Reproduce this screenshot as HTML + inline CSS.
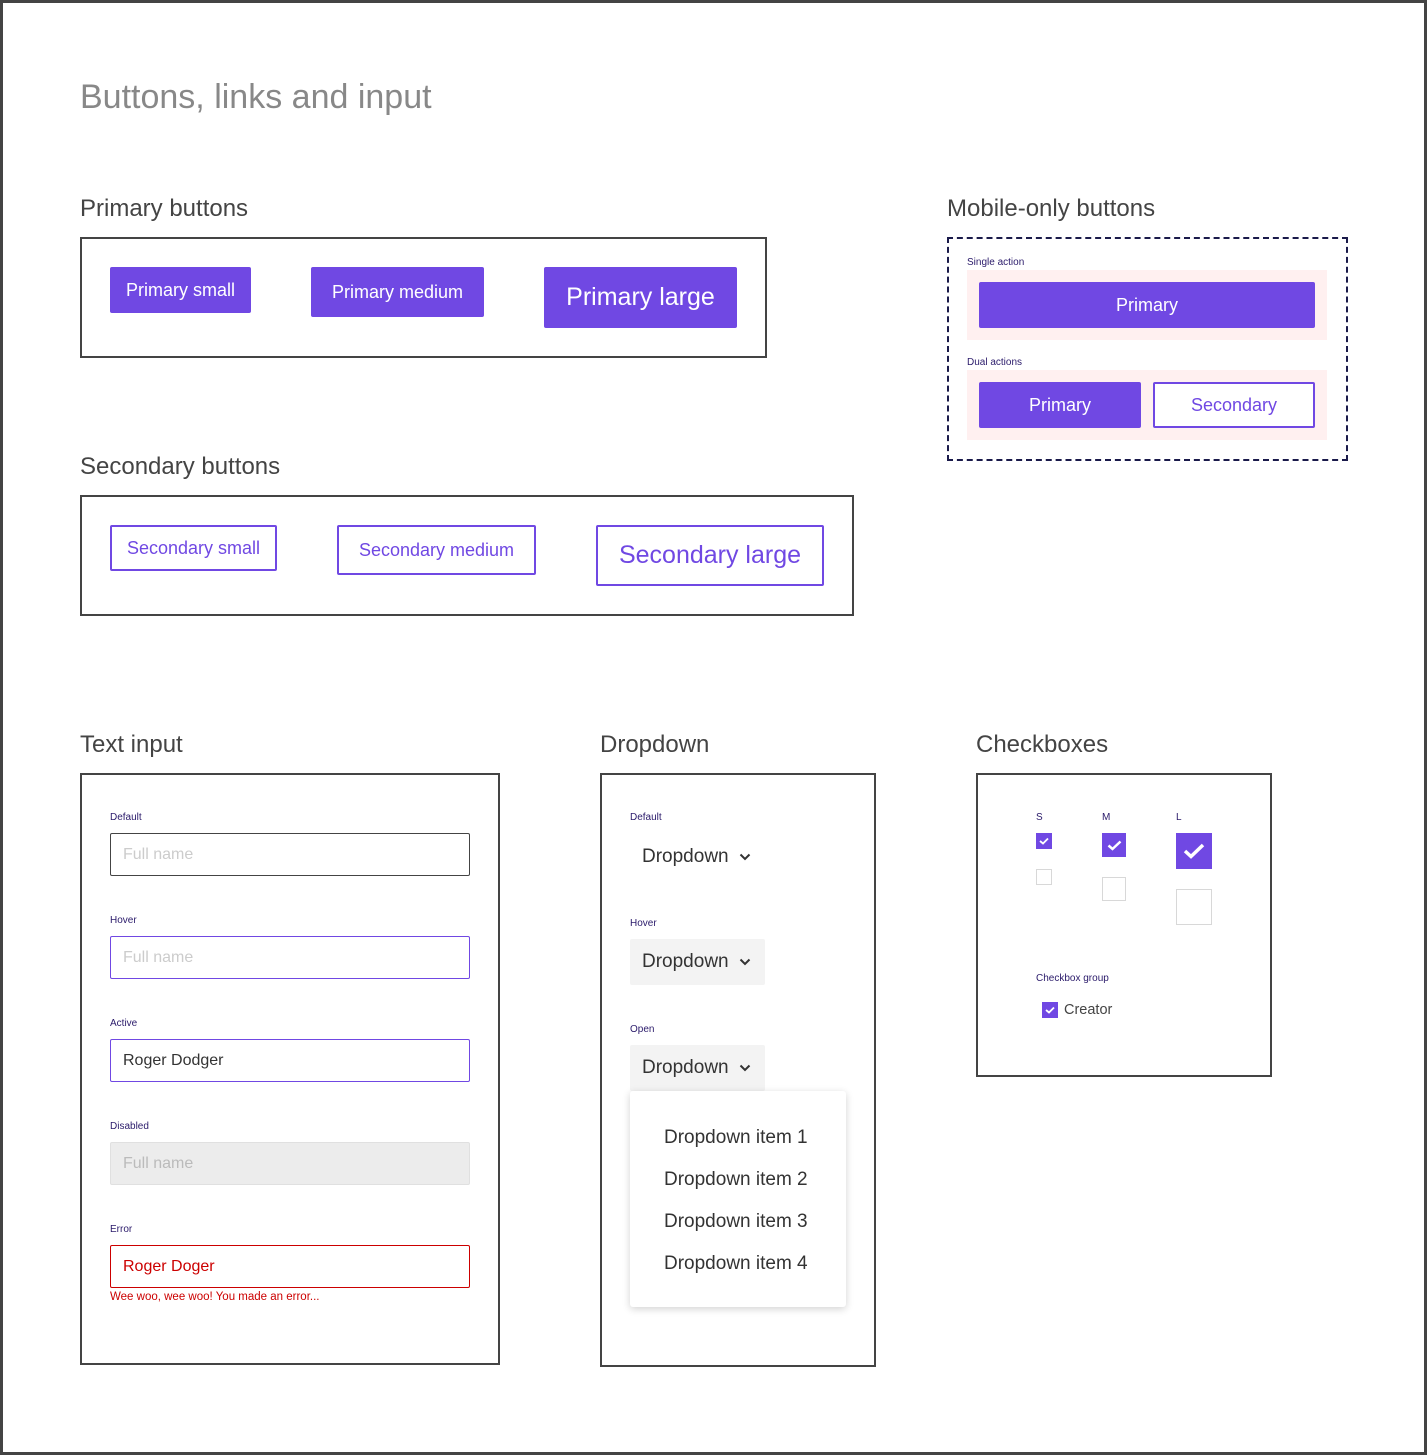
<!DOCTYPE html>
<html><head><meta charset="utf-8"><style>
*{margin:0;padding:0;box-sizing:border-box}
body{width:1427px;height:1455px;position:relative;background:#fff;font-family:"Liberation Sans",sans-serif;overflow:hidden}
.frame{position:absolute;left:0;top:0;width:1427px;height:1455px;border:3px solid #444}
.a{position:absolute}
.h{position:absolute;font-size:24px;color:#444;line-height:1}
.box{position:absolute;border:2px solid #444}
.pb{position:absolute;background:#7048e3;color:#fff;display:flex;align-items:center;justify-content:center;border-radius:2px}
.sb{position:absolute;border:2px solid #7048e3;color:#7048e3;display:flex;align-items:center;justify-content:center;background:#fff;border-radius:2px}
.lbl{position:absolute;font-size:10px;color:#2a1a6a;line-height:1}
.in{position:absolute;left:110px;width:360px;height:43px;border:1px solid #444;border-radius:2px;font-size:16px;padding-left:12px;display:flex;align-items:center;color:#ccc}
.dd{position:absolute;left:630px;width:135px;height:46px;font-size:19px;color:#333;display:flex;align-items:center;padding-left:12px;border-radius:2px}
.dd svg{margin-left:10px}
.cb{position:absolute;background:#7048e3;display:flex;align-items:center;justify-content:center}
.cu{position:absolute;border:1px solid #d8d8d8}
.it{position:absolute;left:664px;font-size:19px;color:#333;line-height:1}
</style></head><body>
<div class="frame"></div>
<div class="a" style="left:80px;top:80px;font-size:34px;color:#888;line-height:1">Buttons, links and input</div>

<div class="h" style="left:80px;top:197px">Primary buttons</div>
<div class="box" style="left:80px;top:237px;width:687px;height:121px"></div>
<div class="pb" style="left:110px;top:267px;width:141px;height:46px;font-size:18px">Primary small</div>
<div class="pb" style="left:311px;top:267px;width:173px;height:50px;font-size:18px">Primary medium</div>
<div class="pb" style="left:544px;top:267px;width:193px;height:61px;font-size:25px">Primary large</div>

<div class="h" style="left:80px;top:455px">Secondary buttons</div>
<div class="box" style="left:80px;top:495px;width:774px;height:121px"></div>
<div class="sb" style="left:110px;top:525px;width:167px;height:46px;font-size:18px">Secondary small</div>
<div class="sb" style="left:337px;top:525px;width:199px;height:50px;font-size:18px">Secondary medium</div>
<div class="sb" style="left:596px;top:525px;width:228px;height:61px;font-size:25px">Secondary large</div>

<div class="h" style="left:947px;top:197px">Mobile-only buttons</div>
<div class="a" style="left:947px;top:237px;width:401px;height:224px;border:2px dashed #1a1a4a"></div>
<div class="lbl" style="left:967px;top:258px">Single action</div>
<div class="a" style="left:967px;top:270px;width:360px;height:70px;background:#fff0f0"></div>
<div class="pb" style="left:979px;top:282px;width:336px;height:46px;font-size:18px">Primary</div>
<div class="lbl" style="left:967px;top:358px">Dual actions</div>
<div class="a" style="left:967px;top:370px;width:360px;height:70px;background:#fff0f0"></div>
<div class="pb" style="left:979px;top:382px;width:162px;height:46px;font-size:18px">Primary</div>
<div class="sb" style="left:1153px;top:382px;width:162px;height:46px;font-size:18px">Secondary</div>

<div class="h" style="left:80px;top:733px">Text input</div>
<div class="box" style="left:80px;top:773px;width:420px;height:592px"></div>
<div class="lbl" style="left:110px;top:813px">Default</div>
<div class="in" style="top:833px">Full name</div>
<div class="lbl" style="left:110px;top:916px">Hover</div>
<div class="in" style="top:936px;border-color:#7048e3">Full name</div>
<div class="lbl" style="left:110px;top:1019px">Active</div>
<div class="in" style="top:1039px;border-color:#7048e3;color:#333">Roger Dodger</div>
<div class="lbl" style="left:110px;top:1122px">Disabled</div>
<div class="in" style="top:1142px;border-color:#e0e0e0;background:#ececec;color:#bbb">Full name</div>
<div class="lbl" style="left:110px;top:1225px">Error</div>
<div class="in" style="top:1245px;border-color:#c00;color:#c00">Roger Doger</div>
<div class="a" style="left:110px;top:1292px;font-size:11.5px;color:#c00;line-height:1">Wee woo, wee woo! You made an error...</div>

<div class="h" style="left:600px;top:733px">Dropdown</div>
<div class="box" style="left:600px;top:773px;width:276px;height:594px"></div>
<div class="lbl" style="left:630px;top:813px">Default</div>
<div class="dd" style="top:834px">Dropdown<svg width="12" height="8" viewBox="0 0 12 8"><path d="M1.5 1.5 L6 6 L10.5 1.5" fill="none" stroke="#333" stroke-width="2"/></svg></div>
<div class="lbl" style="left:630px;top:919px">Hover</div>
<div class="dd" style="top:939px;background:#f3f3f3">Dropdown<svg width="12" height="8" viewBox="0 0 12 8"><path d="M1.5 1.5 L6 6 L10.5 1.5" fill="none" stroke="#333" stroke-width="2"/></svg></div>
<div class="lbl" style="left:630px;top:1025px">Open</div>
<div class="dd" style="top:1045px;background:#f3f3f3">Dropdown<svg width="12" height="8" viewBox="0 0 12 8"><path d="M1.5 1.5 L6 6 L10.5 1.5" fill="none" stroke="#333" stroke-width="2"/></svg></div>
<div class="a" style="left:630px;top:1091px;width:216px;height:216px;background:#fff;border-radius:3px;box-shadow:0 2px 8px rgba(0,0,0,0.18)"></div>
<div class="it" style="top:1128px">Dropdown item 1</div>
<div class="it" style="top:1170px">Dropdown item 2</div>
<div class="it" style="top:1212px">Dropdown item 3</div>
<div class="it" style="top:1254px">Dropdown item 4</div>

<div class="h" style="left:976px;top:733px">Checkboxes</div>
<div class="box" style="left:976px;top:773px;width:296px;height:304px"></div>
<div class="lbl" style="left:1036px;top:813px">S</div>
<div class="lbl" style="left:1102px;top:813px">M</div>
<div class="lbl" style="left:1176px;top:813px">L</div>
<div class="cb" style="left:1036px;top:833px;width:16px;height:16px"><svg width="10" height="8" viewBox="0 0 10 8"><path d="M1 4 L4 6.5 L9 1.5" fill="none" stroke="#fff" stroke-width="1.8"/></svg></div>
<div class="cu" style="left:1036px;top:869px;width:16px;height:16px"></div>
<div class="cb" style="left:1102px;top:833px;width:24px;height:24px"><svg width="15" height="11" viewBox="0 0 15 11"><path d="M1.5 5.5 L5.5 9 L13.5 1.5" fill="none" stroke="#fff" stroke-width="2.5"/></svg></div>
<div class="cu" style="left:1102px;top:877px;width:24px;height:24px"></div>
<div class="cb" style="left:1176px;top:833px;width:36px;height:36px"><svg width="22" height="16" viewBox="0 0 22 16"><path d="M2 8 L8 13.5 L20 2" fill="none" stroke="#fff" stroke-width="3.5"/></svg></div>
<div class="cu" style="left:1176px;top:889px;width:36px;height:36px"></div>
<div class="lbl" style="left:1036px;top:974px">Checkbox group</div>
<div class="cb" style="left:1042px;top:1002px;width:16px;height:16px"><svg width="10" height="8" viewBox="0 0 10 8"><path d="M1 4 L4 6.5 L9 1.5" fill="none" stroke="#fff" stroke-width="1.8"/></svg></div>
<div class="a" style="left:1064px;top:1003px;font-size:14.5px;color:#444;line-height:1">Creator</div>
</body></html>
